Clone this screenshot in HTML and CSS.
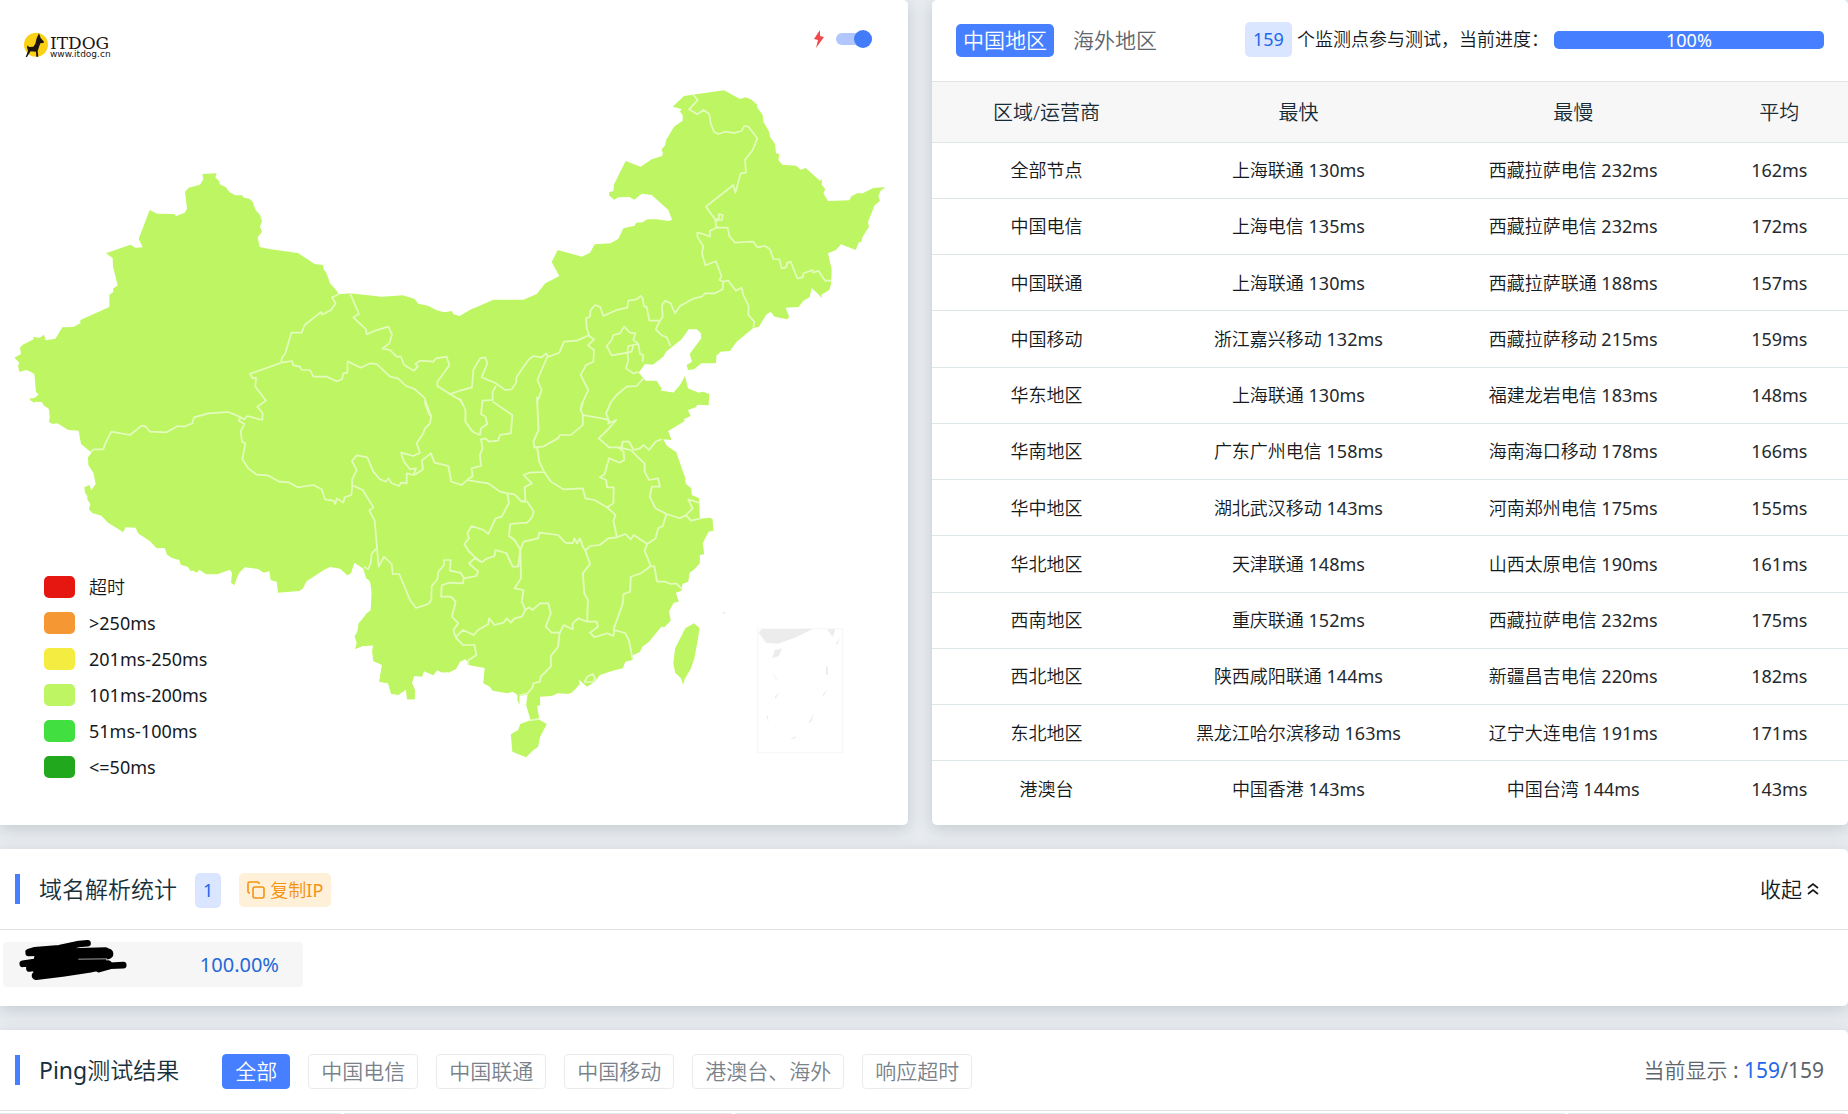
FILE: index.html
```html
<!DOCTYPE html>
<html lang="zh-CN">
<head>
<meta charset="utf-8">
<title>ITDOG Ping</title>
<link rel="stylesheet" href="styles.css">
</head>
<body>
<main class="page">
  <div class="top-row">
    <section class="card map-card">
      <svg class="map" viewBox="0 0 2724 2475" role="img" aria-label="全国延迟地图">
        <g class="land">
          <path d="M150 1262 148 1230 142 1219 132 1217 126 1206 110 1204 102 1208 87 1196 105 1193 116 1183 108 1176 103 1122 94 1117 79 1110 58 1116 54 1098 58 1088 43 1073 63 1062 60 1043 68 1034 101 1018 100 1010 118 1014 132 1004 137 1021 166 1016 187 982 220 981 241 970 241 960 328 921 328 884 340 876 339 866 353 856 339 800 338 774 318 760 391 734 406 743 428 742 416 716 449 630 472 641 522 642 529 648 554 638 561 626 555 576 566 563 600 554 610 538 607 522 650 520 646 532 659 545 658 552 678 562 688 576 706 586 726 586 732 593 748 596 757 604 767 630 780 645 786 664 780 680 786 696 773 712 779 741 812 748 894 759 944 792 969 795 971 808 979 818 990 850 1010 872 1016 883 1050 880 1145 890 1208 886 1243 896 1255 911 1284 917 1310 931 1333 937 1356 933 1360 943 1380 948 1420 925V1400H330L240 1292Z"/>
          <path transform="translate(0 1200)" d="M88 0 100 4 128 7 133 18 147 26 150 48 147 66 158 72 172 70 205 90 236 92 243 132 275 158 264 172 265 196 280 218 287 252 274 271 268 255 253 262 255 278 262 288 262 298 271 312 267 328 277 339 304 347 324 368 370 397 376 382 407 383 414 400 450 424 470 445 494 444 501 464 516 474 538 480 542 494 563 500 572 513 580 512 590 518 598 509 618 523 652 523 690 509 696 520 693 548 703 556 710 535 718 518 734 502 774 507 791 518 808 514 812 540 830 545 834 578 898 573 908 566 920 544 970 511 990 501 1020 506 1044 526 1054 518 1060 487 1092 502 1098 530 1110 545 1115 575 1112 632 1100 640 1090 658 1076 670 1072 698 1066 712 1072 730 1066 747 1088 738 1120 736 1116 752 1120 784 1146 794 1138 845 1164 850 1174 882 1196 884 1218 868 1222 898 1244 898 1245 870 1236 850 1241 828 1266 830 1272 814 1300 824 1310 810 1335 818 1368 806 1380 785V-40Z"/>
          <path transform="translate(1380 180)" d="M-60 1300V830L0 768 30 750 100 719 190 719 230 702 256 670 298 648 275 606 293 570 366 590 390 578 404 553 452 550 475 536 490 505 524 497 528 488 548 487 562 478 590 478 625 483 636 479 625 450 575 405 545 401 523 419 508 411 476 412 462 419 447 406 448 396 460 394 462 373 497 303 542 320 575 298 606 288 609 278 604 270 616 254 618 241 642 200 668 182 668 165 660 155 664 147 638 140 672 108 792 91 840 117 857 112 875 119 892 135 892 143 908 165 910 185 926 212 931 232 945 252 948 280 958 282 955 300 967 314 1009 317 1022 329 1037 324 1080 362 1086 358 1085 374 1096 388 1090 400 1104 423 1168 421 1174 409 1192 400 1208 400 1240 384 1276 381 1262 392 1255 408 1260 422 1244 436 1224 486 1227 500 1208 530 1204 545 1196 548 1187 570 1143 553 1128 570 1104 580 1115 628 1113 672 1108 690 1084 704 1086 715 1072 700 1055 684 1049 712 1030 722 1016 741 977 743 988 772 980 778 944 770 932 755 918 765 897 800 880 804 830 845 810 873 782 875 769 887 768 910 724 910 702 928 684 930 680 915 696 905 689 882 724 835 722 818 710 808 686 808 665 838 618 875 610 890 578 914 555 912 536 938 557 962 590 962 606 988 592 1000 608 1020 627 1018 634 1005 660 975 675 948 684 985 716 998 730 995 748 1002 746 1036 712 1034 708 1042 684 1050 692 1068 672 1078 674 1086 666 1080 623 1110 634 1138 608 1135 622 1160 648 1175 676 1255V1280Z"/>
          <g transform="translate(1020 1200) scale(1.0905 1)">
            <path d="M0-60V504L20 526 30 518 40 488 64 506 72 535 86 545 88 600 84 632 72 642 52 670 48 695 40 708 46 728 42 746 62 738 92 736 90 755 94 782 116 795 108 845 133 850 140 880 160 884 182 868 184 898 205 898 205 872 197 850 204 828 222 828 230 812 256 826 268 810 280 818 290 812 298 818 318 808 330 785 345 778 356 796 398 804 394 850 412 860 420 872 460 880 475 875 488 884 488 900 494 915 494 888 516 884 512 915 524 960 548 955 542 918 551 916 550 890 582 888 600 880 628 882 640 876 660 852 656 838 668 850 680 860 700 846 715 825 750 812 778 805 785 785 805 780 805 766 825 756 832 740 850 725 884 680 892 682 910 662 905 635 918 608 932 605 924 578 940 572 942 552 958 545 962 518 975 508 990 490 990 465 1002 463 998 430 1014 395 1027 392 1025 358 1018 353 990 356 988 295 968 285 966 265 952 252 925 158 890 130 888 118 912 120 900 95 945 65 960-15 700-60Z"/>
            <path d="M470 1003 490 990 496 972 520 962 545 957 569 972 550 1012 545 1040 530 1052 512 1072 474 1055Z"/>
            <path d="M974 670 989 684 985 715 975 775 965 806 948 838 944 855 938 835 922 818 917 790 922 745 950 685Z"/>
          </g>
        </g>
        <g class="borders">
          <path d="M1016 883 996 892 1007 910 993 930 966 944 964 936 935 958 914 975 905 998 874 998 856 1060 845 1075 844 1088 750 1121 758 1135 768 1133 766 1160 798 1202 772 1220 788 1240 787 1260 742 1248 732 1258 716 1250M1290 1248 1276 1215 1275 1195 1245 1168 1218 1158 1195 1136 1170 1130 1130 1092 1110 1090 1082 1103 1043 1084 1042 1118 1030 1120 1026 1138 1010 1144 980 1130 940 1130 930 1110 905 1110 900 1100 880 1096 876 1083 844 1088M1050 880 1077 942 1060 952 1098 988 1100 1003 1125 992 1165 980 1176 1003 1168 1030 1147 1046 1170 1050 1190 1070 1203 1070 1212 1095 1242 1112 1254 1100 1246 1092 1260 1082 1300 1085 1308 1075 1340 1070 1348 1096 1312 1145 1312 1158 1350 1182 1380 1172M1350 1182 1380 1200"/>
          <path transform="translate(0 1200)" d="M272 155 282 148 310 148 316 130 334 95 390 105 425 77 438 80 450 95 500 97 533 78 552 80 577 70 582 52 625 40 685 36 712 47 722 52 716 62 733 72 722 95 726 125 736 130 727 178 745 205 770 224 803 226 838 245 866 247 893 262 940 255 965 268 975 298 1000 302 1006 312 1010 295 1030 308 1034 292 1054 285 1057 256 1056 240 1070 210 1056 184 1070 166 1102 172 1120 215 1140 238 1158 245 1165 235 1175 250 1198 258 1203 248 1220 250 1220 220 1240 225 1248 205 1230 208 1212 185 1203 158 1240 168 1260 158 1250 130 1270 100 1275 85 1290 70 1294 45M1057 256 1088 270 1120 322 1108 332 1124 362 1136 500 1152 470 1175 492 1178 522 1198 522 1230 600 1248 624 1285 612 1294 600 1295 558 1312 538 1315 515 1332 495 1332 480 1352 480 1350 512 1380 518M1130 445 1115 460 1112 490 1104 508 1092 500"/>
          <path transform="translate(1380 180)" d="M700 104 713 120 687 148 712 163 730 150 748 162 752 190 762 216 775 222 795 215 822 219 845 213 852 198 865 200 892 235 878 270 855 300 858 338 842 340 826 398 820 375 738 440 765 478 770 503M765 480 778 474 776 462 788 465 786 480 765 482M770 503 750 512 750 530 730 522 712 518 712 530 730 560 726 580 736 616 768 604 785 650 778 660 790 665M770 503 803 503 808 528 825 548 850 546 880 545 892 562 915 558 930 568 940 597 958 598 965 625 978 622 982 608 992 605 1012 655 1028 652 1030 640 1058 630 1060 638 1075 632 1095 662 1113 662M790 665 805 662 828 692 845 683 850 705 866 738 865 765 883 785 880 802M790 665 788 688 765 700 735 700 725 710 700 716 660 738 645 760 632 730 615 722 606 735 608 770 600 782 587 808 605 826 620 832 632 858M600 782 568 782 560 740 552 740 548 715 542 708 530 718 505 722 502 743 470 750 430 768 420 740 405 735 392 750 390 770 378 775 380 805 388 828 402 838 384 856 402 870 400 905 378 915 362 945 385 990 362 1040M388 825 350 842 312 845 298 878 265 890 258 880 245 892 220 888 205 900 170 950 168 968 155 988 135 990 108 970 65 952 82 910 76 892 60 895 40 930 36 982 0 992M262 890 232 960 245 990 230 1030M440 858 455 840 460 825 480 820 492 800 510 818 526 820 520 840 535 852 505 858 502 878 455 886ZM520 855 515 875 502 878 505 900 498 925 520 940 536 936M535 852 540 882 550 885 548 905M550 955 530 978 500 980 470 1005 450 1030M108 978 98 995 98 1022M0 1020 10 1035"/>
          <g transform="translate(1020 1200) scale(1.0905 1)">
            <path d="M330 516 342 535 375 528 380 515 355 490 370 475 390 487M340 535 338 550 300 548 280 556 278 590 305 590 318 605 308 650 325 670 312 690 318 712 338 690 368 705 380 690 408 672 410 655 425 675 450 668 458 655 470 668 480 655 500 650 510 630 520 622 530 630 550 610 573 610 580 640 566 680 575 690 582 698 605 698 615 675 640 688 640 670 655 655 680 665 706 665 710 680 688 698 700 712 735 700 752 708 755 690 785 700 795 722 805 778M318 712 338 735 370 735 375 765 352 782 352 795M604 698 600 740 580 768 580 800 552 830 550 845 532 850 530 862 516 880 494 886M390 487 400 478 425 468 428 450 458 460 475 500 490 500 496 450M460 280 465 308 445 350 428 355 408 402 395 390 362 378 350 400 355 415 342 432 355 455 370 470 390 487M460 280 480 283 500 305 515 305 533 335 528 352 515 368 468 372 465 408 480 420 496 448M500 305 510 300 508 262 528 250 505 225 520 218 562 216M542-10 546 90 532 125 535 142 543 145 548 185 562 216 580 245 615 268 668 265 675 295 700 300 735 322M735 322 752 310 753 262 735 262 732 240 715 232 728 222 740 175 770 188 782 180 780 155 765 142"/>
            <path d="M205 225 228 208 225 182 250 160 260 188 298 198 306 245 335 255 350 240 375 245 408 250 440 275 460 280M234 0 250 48M350 240 365 228 362 205 388 198 385 165 392 145 388 118 400 115 410 125 435 122 440 105 470 100 474 45 420 5M330-5 345 30 345 65 365 95 385 105 388 85 405 72 400 50 388 42 392 2 420 0M535 142 558 140 600 115 605 105 635 105 668 75 668 45 662 30 668 8M668 45 735 58 742 68 732 40 745 8M735 72 760 60 740 85 712 115 740 142 765 142 775 142 778 125 795 125 808 150 825 145 835 135 850 150 868 125 885 118M765 142 800 150 820 172 838 190 838 215 850 240 875 235 880 260 858 260 852 290 868 325 898 342 935 355 952 345 970 325 958 298 988 308M952 345 965 362 990 356M898 342 888 378 875 385 868 415 845 432 838 452 855 498 865 500 872 545 895 545 910 552 925 550 942 568M855 498 828 520 800 530 798 575 780 582 778 610 752 690M735 322 758 345 752 362 762 412M675 452 688 438 715 435 738 415 762 412 785 402 800 418 808 405 845 432M496 450 505 425 545 415 548 398 600 405 620 428 640 430 645 415 652 430 660 415 668 440 675 452 688 492 668 520 672 580 682 600 680 665M496 448 498 535 480 565 505 570 500 605 510 630M680 830 695 822 702 835 696 846 673 846ZM520 961 548 957"/>
          </g>
        </g>
        <g class="inset" transform="translate(1020 1200) scale(1.0905 1)">
          <path class="inset-frame" d="M1149 686H1383V1058H1149Z"/>
          <path d="M1152 698 1160 687H1300L1255 712 1205 731 1172 728ZM1340 688H1363L1355 711ZM1196 750 1216 746 1207 768 1189 775ZM1337 800H1342V825H1337ZM1375 714 1367 735 1364 730ZM1340 868 1330 890 1328 884ZM1306 938 1296 966 1288 970ZM1210 876 1198 896 1196 890ZM1172 946 1177 948 1179 968ZM1190 815 1202 838 1200 840ZM1238 1016 1256 1008 1250 1016ZM1054 636H1060V641H1054Z"/>
        </g>
      </svg>
      <header class="map-head">
        <a class="logo" href="#" aria-label="ITDOG">
          <svg class="logo-mark" viewBox="0 0 72 74" aria-hidden="true">
            <circle cx="36" cy="36" r="36" fill="#fbd116"/>
            <path fill="#1d1410" d="M45 2 50 16 60 27 58 31 49 32 46 40 43 49 41 55 43 72H37L36 57 20 56 15 63 9 73H5L12 55 9 44 11 38 15 43 28 42 34 33 38 17Z"/>
          </svg>
          <span class="logo-text"><b class="logo-name">ITDOG</b><small class="logo-url">www.itdog.cn</small></span>
        </a>
        <label class="fast">
          <svg class="bolt" viewBox="0 0 10 18" aria-hidden="true"><path fill="#f2484d" d="M6 0 0 9 4 10 2 18 10 7 6 6Z"/></svg>
          <input class="switch" type="checkbox" aria-label="快速模式" checked>
        </label>
      </header>
      <ul class="legend">
        <li><i class="swatch timeout"></i><span class="cjk">超时</span></li>
        <li><i class="swatch slowest"></i>&gt;250ms</li>
        <li><i class="swatch slow"></i>201ms-250ms</li>
        <li><i class="swatch medium"></i>101ms-200ms</li>
        <li><i class="swatch fast-green"></i>51ms-100ms</li>
        <li><i class="swatch fastest"></i>&lt;=50ms</li>
      </ul>
    </section>

    <section class="card stats-card">
      <header class="stats-head">
        <nav class="tabs">
          <button class="tab active" type="button">中国地区</button>
          <button class="tab" type="button">海外地区</button>
        </nav>
        <p class="status"><span class="badge">159</span><span>个监测点参与测试，当前进度：</span></p>
        <div class="progress" role="progressbar" aria-label="进度" aria-valuenow="100"><div class="progress-bar" style="width:100%">100%</div></div>
      </header>
      <div class="table-wrap">
        <table class="stats">
          <colgroup><col class="c1"><col class="c2"><col class="c2"><col class="c3"></colgroup>
          <thead><tr><th>区域/运营商</th><th>最快</th><th>最慢</th><th>平均</th></tr></thead>
          <tbody>
            <tr><td>全部节点</td><td>上海联通 <span>130ms</span></td><td>西藏拉萨电信 <span>232ms</span></td><td><span>162ms</span></td></tr>
            <tr><td>中国电信</td><td>上海电信 <span>135ms</span></td><td>西藏拉萨电信 <span>232ms</span></td><td><span>172ms</span></td></tr>
            <tr><td>中国联通</td><td>上海联通 <span>130ms</span></td><td>西藏拉萨联通 <span>188ms</span></td><td><span>157ms</span></td></tr>
            <tr><td>中国移动</td><td>浙江嘉兴移动 <span>132ms</span></td><td>西藏拉萨移动 <span>215ms</span></td><td><span>159ms</span></td></tr>
            <tr><td>华东地区</td><td>上海联通 <span>130ms</span></td><td>福建龙岩电信 <span>183ms</span></td><td><span>148ms</span></td></tr>
            <tr><td>华南地区</td><td>广东广州电信 <span>158ms</span></td><td>海南海口移动 <span>178ms</span></td><td><span>166ms</span></td></tr>
            <tr><td>华中地区</td><td>湖北武汉移动 <span>143ms</span></td><td>河南郑州电信 <span>175ms</span></td><td><span>155ms</span></td></tr>
            <tr><td>华北地区</td><td>天津联通 <span>148ms</span></td><td>山西太原电信 <span>190ms</span></td><td><span>161ms</span></td></tr>
            <tr><td>西南地区</td><td>重庆联通 <span>152ms</span></td><td>西藏拉萨电信 <span>232ms</span></td><td><span>175ms</span></td></tr>
            <tr><td>西北地区</td><td>陕西咸阳联通 <span>144ms</span></td><td>新疆昌吉电信 <span>220ms</span></td><td><span>182ms</span></td></tr>
            <tr><td>东北地区</td><td>黑龙江哈尔滨移动 <span>163ms</span></td><td>辽宁大连电信 <span>191ms</span></td><td><span>171ms</span></td></tr>
            <tr><td>港澳台</td><td>中国香港 <span>143ms</span></td><td>中国台湾 <span>144ms</span></td><td><span>143ms</span></td></tr>
          </tbody>
        </table>
      </div>
    </section>
  </div>

  <section class="card">
    <header class="section-head">
      <h2 class="title">域名解析统计</h2>
      <span class="badge count">1</span>
      <button class="copy" type="button">
        <svg class="copy-icon" viewBox="0 0 18 18" fill="none" stroke="currentColor" stroke-width="1.600" aria-hidden="true"><rect x="6" y="6" width="11" height="11" rx="2"/><path d="M3 12H2.500A1.500 1.500 0 0 1 1 10.500V2.500A1.500 1.500 0 0 1 2.500 1H10.500A1.500 1.500 0 0 1 12 2.500V3"/></svg><span>复制<span class="latin">IP</span></span>
      </button>
      <button class="collapse" type="button">收起<svg class="chevrons" viewBox="0 0 12 14" fill="none" stroke="currentColor" stroke-width="1.700" aria-hidden="true"><path d="M1 6 6 2 11 6M1 12 6 8 11 12"/></svg></button>
    </header>
    <div class="ip-list">
      <div class="ip-item">
        <svg class="scribble" viewBox="0 0 330 124" aria-hidden="true">
          <g fill="none" stroke="#000" stroke-linecap="round" stroke-linejoin="round">
            <path stroke-width="20" d="M28 37 45 31 120 25 180 12 206 10M28 39 260 32"/>
            <path stroke-width="26" d="M50 108 130 98 210 86 268 74"/>
            <path stroke-width="32" d="M60 55 130 52 230 45 268 42"/>
            <path stroke-width="20" d="M10 72 50 66M30 86 130 70M240 88 275 78 314 76"/>
            <path stroke-width="36" d="M55 84 120 74 245 65M60 92 130 86 230 74"/>
          </g>
          <path stroke="#f6f6f6" stroke-width="2" d="M178 58 265 57"/>
        </svg>
        <span class="share">100.00%</span>
      </div>
    </div>
  </section>

  <section class="card results">
    <header class="section-head">
      <h2 class="title"><span><span class="latin">Ping</span>测试结果</span></h2>
      <div class="filters">
        <button class="filter active" type="button">全部</button>
        <button class="filter" type="button">中国电信</button>
        <button class="filter" type="button">中国联通</button>
        <button class="filter" type="button">中国移动</button>
        <button class="filter" type="button">港澳台、海外</button>
        <button class="filter" type="button">响应超时</button>
      </div>
      <p class="showing">当前显示 <span class="latin">: <b>159</b>/159</span></p>
    </header>
    <div class="result-cols"><span></span><span></span><span></span><span></span></div>
  </section>
</main>
</body>
</html>
```
FILE: styles.css
```css
* { box-sizing: border-box; }

body {
  margin: 0;
  background: #e8ecf0;
  color: #15191c;
  font-family: "Noto Sans", "Noto Sans CJK SC", sans-serif;
  font-weight: 350;
  font-size: 18px;
  line-height: 24px;
  overflow-x: hidden;
}

button {
  border: 0;
  background: none;
  padding: 0;
  color: inherit;
  font: inherit;
  white-space: nowrap;
  cursor: pointer;
}

p, h2, ul { margin: 0; padding: 0; }

.latin { font-weight: 400; }

.page {
  display: flex;
  flex-direction: column;
  gap: 24px;
  height: 100vh;
  overflow: hidden;
}

.top-row {
  display: grid;
  grid-template-columns: 908fr 916fr;
  gap: 24px;
  flex: none;
}

.card {
  flex: none;
  min-width: 0;
  background: #fff;
  border-radius: 0 5px 5px 0;
  box-shadow: 0 4px 16px rgba(60, 70, 85, .2);
}

/* Map */
.map-card { display: grid; align-items: start; }
.map, .map-head, .legend { grid-area: 1 / 1; }
.map { display: block; width: 100%; }
.land { fill: #bef663; }
.borders { fill: none; stroke: #e4fbc0; stroke-width: 5; stroke-linejoin: round; }
.inset { fill: #ececec; }
.inset-frame { fill: none; stroke: #f6f6f6; stroke-width: 3; }

.map-head {
  display: flex;
  justify-content: space-between;
  align-items: flex-start;
  padding: 30px 36px 0 24px;
}
.logo { display: flex; gap: 2px; color: #1d1410; text-decoration: none; }
.logo-mark { width: 24px; height: 30px; }
.logo-text { display: flex; flex-direction: column; padding-top: 6px; }
.logo-name { font: 400 17px/15px "DejaVu Serif", serif; }
.logo-url { font: 400 9px/7px "DejaVu Sans", sans-serif; }
.fast { display: flex; align-items: center; gap: 12px; }
.bolt { width: 10px; height: 18px; }
.switch {
  appearance: none;
  display: flex;
  align-items: center;
  justify-content: flex-end;
  width: 36px;
  height: 12px;
  margin: 0;
  border-radius: 6px;
  background: #b0c6fc;
}
.switch::before {
  content: "";
  flex: none;
  width: 18px;
  height: 18px;
  border-radius: 50%;
  background: #427cf8;
}

.legend {
  align-self: end;
  justify-self: start;
  list-style: none;
  padding: 0 0 40px 44px;
  font-weight: 400;
}
.legend li { display: flex; align-items: center; gap: 14px; height: 36px; }
.cjk { font-weight: 350; }
.swatch { width: 31px; height: 22px; border-radius: 5px; }
.timeout { background: #e61610; }
.slowest { background: #f59833; }
.slow { background: #f5ec42; }
.medium { background: #bef663; }
.fast-green { background: #42df40; }
.fastest { background: #22a81c; }

/* Region statistics */
.stats-card { display: flex; flex-direction: column; padding-bottom: 8px; border-radius: 5px; }
.stats-head {
  display: flex;
  align-items: center;
  padding: 22px 24px 24px;
  border-bottom: 1px solid #dee4e8;
}
.tabs { display: flex; gap: 12px; margin: 2px 81px 0 0; }
.tab {
  height: 33px;
  padding: 0 7px;
  border-radius: 5px;
  color: #5d656d;
  font-size: 21px;
  line-height: 33px;
}
.tab.active { background: #467fff; color: #fff; }
.badge {
  padding: 0 8px;
  border-radius: 5px;
  background: #dae5ff;
  color: #2468ea;
  font-weight: 400;
  line-height: 35px;
}
.status { display: flex; align-items: center; gap: 5px; line-height: 35px; white-space: nowrap; }
.progress {
  flex: 1;
  height: 18px;
  margin-left: 5px;
  border-radius: 5px;
  background: #e9ecef;
}
.progress-bar {
  display: flex;
  align-items: center;
  justify-content: center;
  height: 18px;
  border-radius: 5px;
  background: #467fff;
  color: #fff;
  font-weight: 400;
}

.table-wrap { flex: 1; display: grid; }
.stats { width: 100%; height: 100%; border-collapse: collapse; table-layout: fixed; text-align: center; }
.c1 { width: 25%; }
.c2 { width: 30%; }
.c3 { width: 15%; }
.stats th {
  height: 60px;
  padding: 2px 0 0;
  background: #f7f7f8;
  color: #172b36;
  font-size: 20px;
  font-weight: 350;
}
.stats td { height: 56px; padding: 0; border-top: 1px solid #dee6ea; }
.stats td span { color: #25292c; font-weight: 400; }

/* Lower sections */
.section-head {
  display: flex;
  align-items: center;
  height: 81px;
  padding: 0 24px 0 15px;
  border-bottom: 1px solid #dfe3e5;
}
.title {
  display: flex;
  align-items: center;
  gap: 19px;
  color: #17303c;
  font-size: 23px;
  line-height: 30px;
  font-weight: 350;
}
.title::before { content: ""; width: 5px; height: 30px; background: #467fff; }
.count { margin: 2px 18px 0; }
.copy {
  display: flex;
  align-items: center;
  gap: 5px;
  height: 34px;
  margin-top: 2px;
  padding: 0 8px;
  border-radius: 5px;
  background: #fff0da;
  color: #f59310;
}
.copy-icon { width: 18px; height: 18px; }
.collapse { display: flex; align-items: center; gap: 5px; margin: 0 5px 0 auto; font-size: 21px; }
.chevrons { width: 12px; height: 14px; }

.ip-list { display: flex; padding: 12px 3px 19px; }
.ip-item {
  display: flex;
  align-items: center;
  justify-content: space-between;
  width: 300px;
  height: 45px;
  padding: 0 24px 0 16px;
  border-radius: 4px;
  background: #f6f6f6;
}
.scribble { flex: none; width: 110px; height: 41px; margin-bottom: 8px; overflow: visible; }
.share { color: #2468d8; font-size: 20px; font-weight: 400; }

.filters { display: flex; gap: 18px; margin: 2px 0 0 43px; }
.filter {
  height: 35px;
  padding: 0 12px;
  border: 1px solid #e9ecee;
  border-radius: 4px;
  color: #79828b;
  font-size: 21px;
  line-height: 33px;
}
.filter.active { border-color: #467fff; background: #467fff; color: #fff; }
.showing { margin-left: auto; color: #5d656d; font-size: 21px; }
.showing b { color: #2468ea; font-weight: 400; }

.results { border-radius: 0 5px 0 0; }
.result-cols {
  display: grid;
  grid-template-columns: 341fr 388fr 830fr 277fr;
  gap: 3px;
  padding: 2px 3px 0 0;
}
.result-cols span { height: 40px; border-top: 1px solid #e5e8ea; }
```
